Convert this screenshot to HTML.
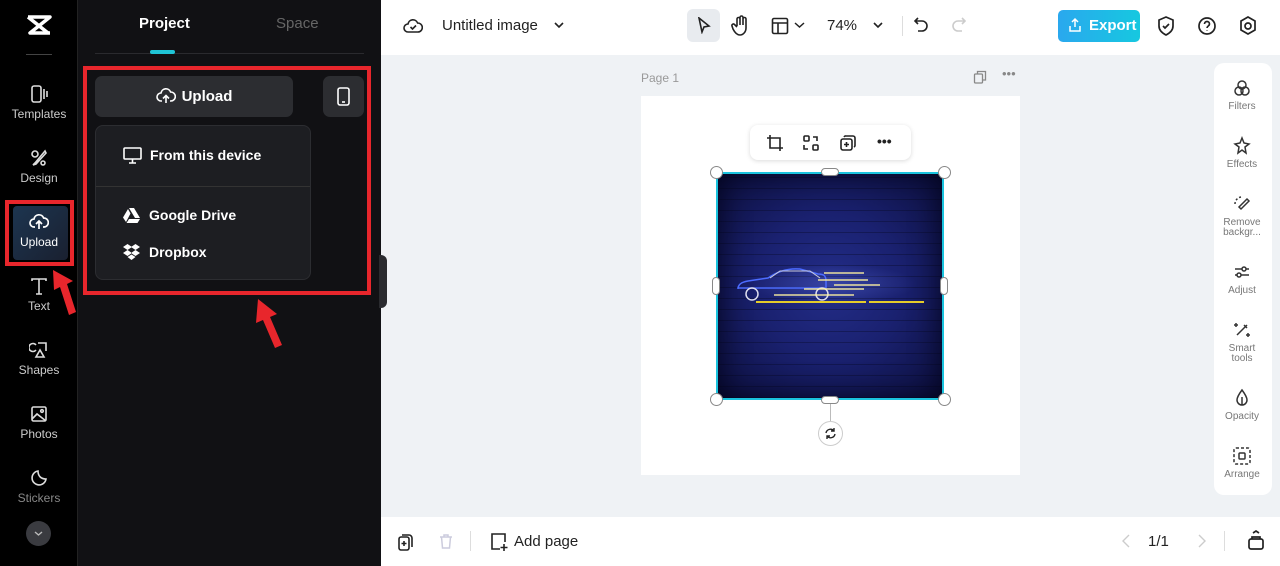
<!DOCTYPE html>
<html><head><meta charset="utf-8"><style>
*{box-sizing:border-box;margin:0;padding:0}
body{width:1280px;height:566px;overflow:hidden;font-family:"Liberation Sans",sans-serif;position:relative;background:#eff2f5}
.abs{position:absolute}
.rail{left:0;top:0;width:78px;height:566px;background:#000;border-right:1px solid #222}
.ri{position:absolute;left:0;width:78px;text-align:center;color:#ccc;font-size:12px}
.ri svg{display:block;margin:0 auto 3px}
.panel{left:78px;top:0;width:303px;height:566px;background:#111114}
.top{left:381px;top:0;width:899px;height:55px;background:#fff}
.bot{left:381px;top:517px;width:899px;height:49px;background:#fff}
.tx{font-size:15px;color:#222}
.rt{position:absolute;left:0;width:56px;text-align:center;font-size:10px;color:#777;line-height:10px}
.rt svg{display:block;margin:0 auto 4px}
</style></head><body>
<div class="abs rail">
 <svg class="abs" style="left:25px;top:14px" width="28" height="22" viewBox="0 0 28 22"><path d="M3 3h22L5 19h20" fill="none" stroke="#fff" stroke-width="3.5" stroke-linejoin="round"/><path d="M3 3l20 16" stroke="#fff" stroke-width="3.5"/></svg>
 <div class="abs" style="left:26px;top:54px;width:26px;height:1px;background:#444"></div>
 <div class="ri" style="top:84px"><svg width="20" height="20" viewBox="0 0 20 20" fill="none" stroke="#ddd" stroke-width="1.6"><rect x="3" y="2" width="9" height="16" rx="2"/><path d="M15 5v10M18 7v6"/></svg>Templates</div>
 <div class="ri" style="top:148px"><svg width="20" height="20" viewBox="0 0 20 20" fill="none" stroke="#ddd" stroke-width="1.6"><circle cx="6" cy="6" r="3"/><path d="M16 3L6 15l-2 2 3-1L17 5z"/><circle cx="14" cy="15" r="2"/></svg>Design</div>
 <div class="abs" style="left:5px;top:200px;width:69px;height:66px;border:4px solid #e8262c;background:#000"><div style="margin:2px 0 0 4px;width:55px;height:54px;background:linear-gradient(135deg,#1c3550,#1a2030);border-radius:4px"></div></div>
 <div class="ri" style="top:212px;color:#fff"><svg width="20" height="20" viewBox="0 0 20 20" fill="none" stroke="#fff" stroke-width="1.7"><path d="M6 15H5a4 4 0 010-8 5 5 0 019.6-1A4 4 0 0115 15h-1"/><path d="M10 17V9M7 12l3-3 3 3"/></svg>Upload</div>
 <div class="ri" style="top:276px"><svg width="20" height="20" viewBox="0 0 20 20" fill="none" stroke="#ddd" stroke-width="1.6"><path d="M3 5V3h14v2M10 3v15M7 18h6"/></svg>Text</div>
 <svg class="abs" style="left:48px;top:268px" width="30" height="50" viewBox="0 0 30 50"><path d="M5 2l1 20 6-3 9 28 7-3-9-28 6-3z" fill="#e8262c"/></svg>
 <div class="ri" style="top:340px"><svg width="20" height="20" viewBox="0 0 20 20" fill="none" stroke="#ddd" stroke-width="1.6"><path d="M7 10a4 4 0 110-5M9 3h8v8"/><path d="M11 10l-4 7h8z"/></svg>Shapes</div>
 <div class="ri" style="top:404px"><svg width="20" height="20" viewBox="0 0 20 20" fill="none" stroke="#ddd" stroke-width="1.6"><rect x="3" y="3" width="14" height="14" rx="1.5"/><path d="M3 15l5-5 9 7"/><circle cx="13" cy="7" r="1.3"/></svg>Photos</div>
 <div class="ri" style="top:468px;color:#888"><svg width="20" height="20" viewBox="0 0 20 20" fill="none" stroke="#ddd" stroke-width="1.6"><path d="M17 11a7 7 0 11-8-8c0 5 3 8 8 8z"/></svg>Stickers</div>
 <div class="abs" style="left:26px;top:521px;width:25px;height:25px;border-radius:50%;background:#3a3b40"><svg width="25" height="25" viewBox="0 0 25 25"><path d="M9 11l3.5 3 3.5-3" fill="none" stroke="#bbb" stroke-width="1.4"/></svg></div>
</div>
<div class="abs panel">
 <div class="abs" style="left:61px;top:15px;font-size:15px;font-weight:bold;color:#fff">Project</div>
 <div class="abs" style="left:198px;top:15px;font-size:15px;color:#666">Space</div>
 <div class="abs" style="left:17px;top:53px;width:269px;height:1px;background:#2a2a2e"></div>
 <div class="abs" style="left:72px;top:50px;width:25px;height:4px;border-radius:2px;background:#1fc4d6"></div>
 <div class="abs" style="left:5px;top:66px;width:288px;height:229px;border:4px solid #e8262c"></div>
 <div class="abs" style="left:17px;top:76px;width:198px;height:41px;background:#2c2d31;border-radius:7px;color:#fff;font-weight:bold;font-size:15px;line-height:41px;text-align:center"><svg style="vertical-align:-4px;margin-right:6px" width="20" height="18" viewBox="0 0 20 18" fill="none" stroke="#fff" stroke-width="1.6"><path d="M6 14H5a4 4 0 010-8 5 5 0 019.6-1A4 4 0 0115 14h-1"/><path d="M10 16V9M7 11.5l3-3 3 3"/></svg>Upload</div>
 <div class="abs" style="left:245px;top:76px;width:41px;height:41px;background:#2c2d31;border-radius:7px"><svg style="margin:11px 13px" width="15" height="19" viewBox="0 0 15 19" fill="none" stroke="#fff" stroke-width="1.6"><rect x="2" y="1" width="11" height="17" rx="2"/><path d="M6 15h3"/></svg></div>
 <div class="abs" style="left:17px;top:125px;width:216px;height:155px;background:#1d1e22;border:1px solid #2c2d31;border-radius:8px;color:#fff;font-weight:bold;font-size:14px">
  <div class="abs" style="left:27px;top:21px"><svg style="vertical-align:-4px;margin-right:8px" width="19" height="17" viewBox="0 0 19 17" fill="none" stroke="#fff" stroke-width="1.6"><rect x="1" y="1" width="17" height="11" rx="1"/><path d="M6 16h7M9.5 12v4"/></svg>From this device</div>
  <div class="abs" style="left:0;top:60px;width:214px;height:1px;background:#333"></div>
  <div class="abs" style="left:27px;top:81px"><svg style="vertical-align:-3px;margin-right:9px" width="17" height="15" viewBox="0 0 17 15" fill="#fff"><path d="M6 0h5l6 10h-5zM5 1l2.5 4.5L3 14 0 9.5zM6 11h11l-2.5 4H3.5z"/></svg>Google Drive</div>
  <div class="abs" style="left:27px;top:118px"><svg style="vertical-align:-3px;margin-right:9px" width="17" height="16" viewBox="0 0 17 16" fill="#fff"><path d="M4.5 0L0 3l4.5 3L9 3zM12.5 0L8 3l4.5 3L17 3zM0 9l4.5 3L9 9 4.5 6zM17 9l-4.5 3L8 9l4.5-3zM4.5 13L8.5 16l4-3-4-2.5z"/></svg>Dropbox</div>
 </div>
 <svg class="abs" style="left:172px;top:295px" width="40" height="55" viewBox="0 0 40 55"><path d="M8 4l-2 24 7-3 12 28 7-3-12-28 7-3z" fill="#e8262c"/></svg>
 <div class="abs" style="left:301px;top:255px;width:8px;height:53px;background:#2a2b2f;border-radius:0 6px 6px 0"></div>
</div>
<div class="abs top">
 <svg class="abs" style="left:22px;top:16px" width="20" height="20" viewBox="0 0 20 20" fill="none" stroke="#222" stroke-width="1.6"><path d="M5 16a4 4 0 010-8 5 5 0 019.6-1A4 4 0 0115 16z"/><path d="M7.5 11l2 2 3.5-3.5"/></svg>
 <div class="abs tx" style="left:61px;top:17px">Untitled image</div>
 <svg class="abs" style="left:172px;top:20px" width="12" height="10"><path d="M2 3l4 4 4-4" fill="none" stroke="#222" stroke-width="1.6"/></svg>
 <div class="abs" style="left:306px;top:9px;width:33px;height:33px;background:#e8ebef;border-radius:6px"><svg style="margin:8px 10px" width="14" height="17" viewBox="0 0 14 17" fill="none" stroke="#222" stroke-width="1.6"><path d="M2 1l10 8-5 1-2 5z"/></svg></div>
 <svg class="abs" style="left:350px;top:15px" width="20" height="22" viewBox="0 0 20 22" fill="none" stroke="#222" stroke-width="1.6"><path d="M6 11V4a1.5 1.5 0 013 0v6V2.5a1.5 1.5 0 013 0V10V4a1.5 1.5 0 013 0v9c0 4-3 7-6 7s-5-2-7-6l-1-3a1.5 1.5 0 012.6-1.4L6 12"/></svg>
 <svg class="abs" style="left:390px;top:17px" width="18" height="18" fill="none" stroke="#222" stroke-width="1.6"><rect x="1.5" y="1.5" width="15" height="15" rx="1.5"/><path d="M1.5 6h15M7 6v10.5"/></svg>
 <svg class="abs" style="left:413px;top:21px" width="11" height="9"><path d="M1 2l4.5 4L10 2" fill="none" stroke="#222" stroke-width="1.5"/></svg>
 <div class="abs tx" style="left:446px;top:17px">74%</div>
 <svg class="abs" style="left:491px;top:20px" width="12" height="10"><path d="M2 3l4 4 4-4" fill="none" stroke="#222" stroke-width="1.6"/></svg>
 <div class="abs" style="left:521px;top:16px;width:1px;height:20px;background:#ddd"></div>
 <svg class="abs" style="left:532px;top:16px" width="16" height="18" fill="none" stroke="#222" stroke-width="1.6"><path d="M5 2L2 5l3 3M2 5h7a5 5 0 010 10H5"/></svg>
 <svg class="abs" style="left:570px;top:16px" width="16" height="18" fill="none" stroke="#ccc" stroke-width="1.6"><path d="M11 2l3 3-3 3M14 5H7a5 5 0 000 10h4"/></svg>
 <div class="abs" style="left:677px;top:10px;width:82px;height:32px;border-radius:5px;background:linear-gradient(90deg,#2aa8ee,#16c8e0);color:#fff;font-weight:bold;font-size:15px;line-height:32px;padding-left:31px">Export</div>
 <svg class="abs" style="left:687px;top:17px" width="14" height="16" fill="none" stroke="#fff" stroke-width="1.5"><path d="M7 10V2M4 5l3-3 3 3M2 9v5h10V9"/></svg>
 <svg class="abs" style="left:775px;top:15px" width="20" height="22" fill="none" stroke="#222" stroke-width="1.7"><path d="M10 2l7 3v6c0 4-3 7-7 9-4-2-7-5-7-9V5z"/><path d="M7 11l2 2 4-4"/></svg>
 <svg class="abs" style="left:816px;top:15px" width="20" height="22" fill="none" stroke="#222" stroke-width="1.7"><circle cx="10" cy="11" r="8"/><path d="M7.5 9a2.5 2.5 0 115 0c0 2-2.5 2-2.5 4M10 15.5v.5"/></svg>
 <svg class="abs" style="left:857px;top:15px" width="20" height="22" fill="none" stroke="#222" stroke-width="1.7"><path d="M10 2l7 4v9l-7 4-7-4V6z"/><circle cx="10" cy="11" r="3"/></svg>
</div>
<div class="abs" style="left:641px;top:71px;font-size:12px;color:#999">Page 1</div>
<svg class="abs" style="left:973px;top:70px" width="14" height="14" fill="none" stroke="#888" stroke-width="1.3"><rect x="1.5" y="4" width="8" height="9" rx="1"/><path d="M4.5 4V1.5h8V10H9.5"/></svg>
<div class="abs" style="left:1002px;top:66px;font-size:13px;color:#888">•••</div>
<div class="abs" style="left:641px;top:96px;width:379px;height:379px;background:#fff"></div>
<div class="abs" style="left:750px;top:125px;width:161px;height:35px;background:#fff;border-radius:8px;box-shadow:0 1px 5px rgba(0,0,0,.15)">
 <svg class="abs" style="left:16px;top:9px" width="18" height="18" fill="none" stroke="#222" stroke-width="1.6"><path d="M4 1v13h13M1 4h13v13"/></svg>
 <svg class="abs" style="left:52px;top:9px" width="18" height="18" fill="none" stroke="#222" stroke-width="1.6"><rect x="2" y="2" width="5" height="5" rx="1"/><rect x="11" y="11" width="5" height="5" rx="1"/><path d="M11 3h4v4M2 11v4h4"/></svg>
 <svg class="abs" style="left:89px;top:9px" width="18" height="18" fill="none" stroke="#222" stroke-width="1.6"><rect x="2" y="5" width="11" height="11" rx="2"/><path d="M5 3a2 2 0 012-1h7a2 2 0 012 2v7a2 2 0 01-1 2M7.5 8v5M5 10.5h5"/></svg>
 <div class="abs" style="left:127px;top:8px;font-size:14px;color:#222;font-weight:bold">•••</div>
</div>
<div class="abs" style="left:716px;top:172px;width:228px;height:228px;border:2px solid #1ac3de;background:radial-gradient(ellipse at 50% 50%,#232d88 0%,#1a2170 45%,#0c0f3c 100%);overflow:hidden">
 <div class="abs" style="left:0;top:0;width:100%;height:100%;opacity:.35;background:repeating-linear-gradient(0deg,#050720 0 1px,transparent 1px 11px)"></div>
 <div class="abs" style="left:0;top:0;width:100%;height:100%;box-shadow:inset 0 0 30px rgba(0,0,20,.8)"></div>
 <div class="abs" style="left:30px;top:90px;width:170px;height:40px;border-radius:50%;background:radial-gradient(ellipse,rgba(120,140,255,.25),transparent 70%)"></div>
 <svg class="abs" style="left:16px;top:90px" width="200" height="45" viewBox="0 0 200 45">
  <path d="M4 25c0-5 4-7 10-8l20-3c10-7 20-10 32-9l18 5c6 0 8 2 8 7v7H4z" fill="none" stroke="#4c6cff" stroke-width="1.5"/>
  <path d="M36 14l10-7h30l10 7" fill="none" stroke="#ccd" stroke-width="1"/>
  <circle cx="18" cy="30" r="6" fill="none" stroke="#dde" stroke-width="1.5"/><circle cx="88" cy="30" r="6" fill="none" stroke="#dde" stroke-width="1.5"/>
  <g stroke="#fff3a0" stroke-width="1.4" opacity=".9"><path d="M90 9h40M84 16h50M70 25h60M100 21h46M40 31h80"/></g>
  <g stroke="#e5cc2a" stroke-width="2"><path d="M22 38h110M135 38h55"/></g>
 </svg>
</div>
<div class="abs" style="left:710px;top:166px;width:13px;height:13px;border-radius:50%;background:#fff;border:1px solid #888"></div>
<div class="abs" style="left:938px;top:166px;width:13px;height:13px;border-radius:50%;background:#fff;border:1px solid #888"></div>
<div class="abs" style="left:710px;top:393px;width:13px;height:13px;border-radius:50%;background:#fff;border:1px solid #888"></div>
<div class="abs" style="left:938px;top:393px;width:13px;height:13px;border-radius:50%;background:#fff;border:1px solid #888"></div>
<div class="abs" style="left:821px;top:168px;width:18px;height:8px;border-radius:4px;background:#fff;border:1px solid #888"></div>
<div class="abs" style="left:821px;top:396px;width:18px;height:8px;border-radius:4px;background:#fff;border:1px solid #888"></div>
<div class="abs" style="left:712px;top:277px;width:8px;height:18px;border-radius:4px;background:#fff;border:1px solid #888"></div>
<div class="abs" style="left:940px;top:277px;width:8px;height:18px;border-radius:4px;background:#fff;border:1px solid #888"></div>
<div class="abs" style="left:830px;top:404px;width:1px;height:17px;background:#bbb"></div>
<div class="abs" style="left:818px;top:421px;width:25px;height:25px;border-radius:50%;background:#fff;border:1px solid #ccc"><svg style="margin:5px" width="13" height="13" fill="none" stroke="#222" stroke-width="1.4"><path d="M2 6a4.5 4.5 0 018-2M11 7a4.5 4.5 0 01-8 2M10 1v3H7M3 12V9h3"/></svg></div>
<div class="abs" style="left:1214px;top:63px;width:58px;height:432px;background:#fff;border-radius:10px">
 <div class="rt" style="top:15px"><svg width="20" height="20" fill="none" stroke="#333" stroke-width="1.5"><circle cx="10" cy="7" r="4"/><circle cx="7" cy="13" r="4"/><circle cx="13" cy="13" r="4"/></svg>Filters</div>
 <div class="rt" style="top:73px"><svg width="20" height="20" fill="none" stroke="#333" stroke-width="1.5"><path d="M10 2l2 5 5 1-4 3 1 6-4-3-4 3 1-6-4-3 5-1z"/></svg>Effects</div>
 <div class="rt" style="top:131px"><svg width="20" height="20" fill="none" stroke="#333" stroke-width="1.5"><path d="M9 3a7 7 0 00-6 7" stroke-dasharray="2 2"/><path d="M15 5l-8 8 2 2 8-8z"/></svg>Remove<br>backgr...</div>
 <div class="rt" style="top:199px"><svg width="20" height="20" fill="none" stroke="#333" stroke-width="1.5"><path d="M3 7h14M3 13h14"/><circle cx="12" cy="7" r="2" fill="#fff"/><circle cx="7" cy="13" r="2" fill="#fff"/></svg>Adjust</div>
 <div class="rt" style="top:257px"><svg width="20" height="20" fill="none" stroke="#333" stroke-width="1.5"><path d="M15 5L5 15M12 5l3 3M4 3v4M2 5h4M16 13v4M14 15h4"/></svg>Smart<br>tools</div>
 <div class="rt" style="top:325px"><svg width="20" height="20" fill="none" stroke="#333" stroke-width="1.5"><path d="M10 2c3 4 5 7 5 10a5 5 0 01-10 0c0-3 2-6 5-10zM10 17V9"/></svg>Opacity</div>
 <div class="rt" style="top:383px"><svg width="20" height="20" fill="none" stroke="#333" stroke-width="1.5"><rect x="2" y="2" width="16" height="16" rx="2" stroke-dasharray="3 2"/><rect x="7" y="7" width="6" height="6" rx="1"/></svg>Arrange</div>
</div>
<div class="abs bot">
 <svg class="abs" style="left:16px;top:15px" width="18" height="20" fill="none" stroke="#222" stroke-width="1.6"><rect x="2" y="5" width="10" height="13" rx="2"/><path d="M5 3h7a3 3 0 013 3v9M7 9v5M4.5 11.5h5"/></svg>
 <svg class="abs" style="left:57px;top:15px" width="16" height="18" fill="none" stroke="#ccd" stroke-width="1.5"><path d="M2 5h12M6 5V3h4v2M3.5 5l1 11h7l1-11"/></svg>
 <div class="abs" style="left:89px;top:14px;width:1px;height:20px;background:#ddd"></div>
 <svg class="abs" style="left:108px;top:14px" width="20" height="22" fill="none" stroke="#222" stroke-width="1.6"><path d="M11 18H3V3h13v8"/><path d="M15 13v7M11.5 16.5h7"/></svg>
 <div class="abs tx" style="left:133px;top:16px">Add page</div>
 <svg class="abs" style="left:740px;top:16px" width="10" height="16" fill="none" stroke="#ccc" stroke-width="1.4"><path d="M8 2L2 8l6 6"/></svg>
 <div class="abs tx" style="left:767px;top:16px">1/1</div>
 <svg class="abs" style="left:816px;top:16px" width="10" height="16" fill="none" stroke="#ccc" stroke-width="1.4"><path d="M2 2l6 6-6 6"/></svg>
 <div class="abs" style="left:843px;top:14px;width:1px;height:20px;background:#ddd"></div>
 <svg class="abs" style="left:866px;top:12px" width="18" height="22" fill="none" stroke="#222" stroke-width="1.7"><rect x="2" y="10" width="14" height="10" rx="2"/><path d="M5 10V8h8v2M6 4l3-2 3 2"/></svg>
</div>
</body></html>
